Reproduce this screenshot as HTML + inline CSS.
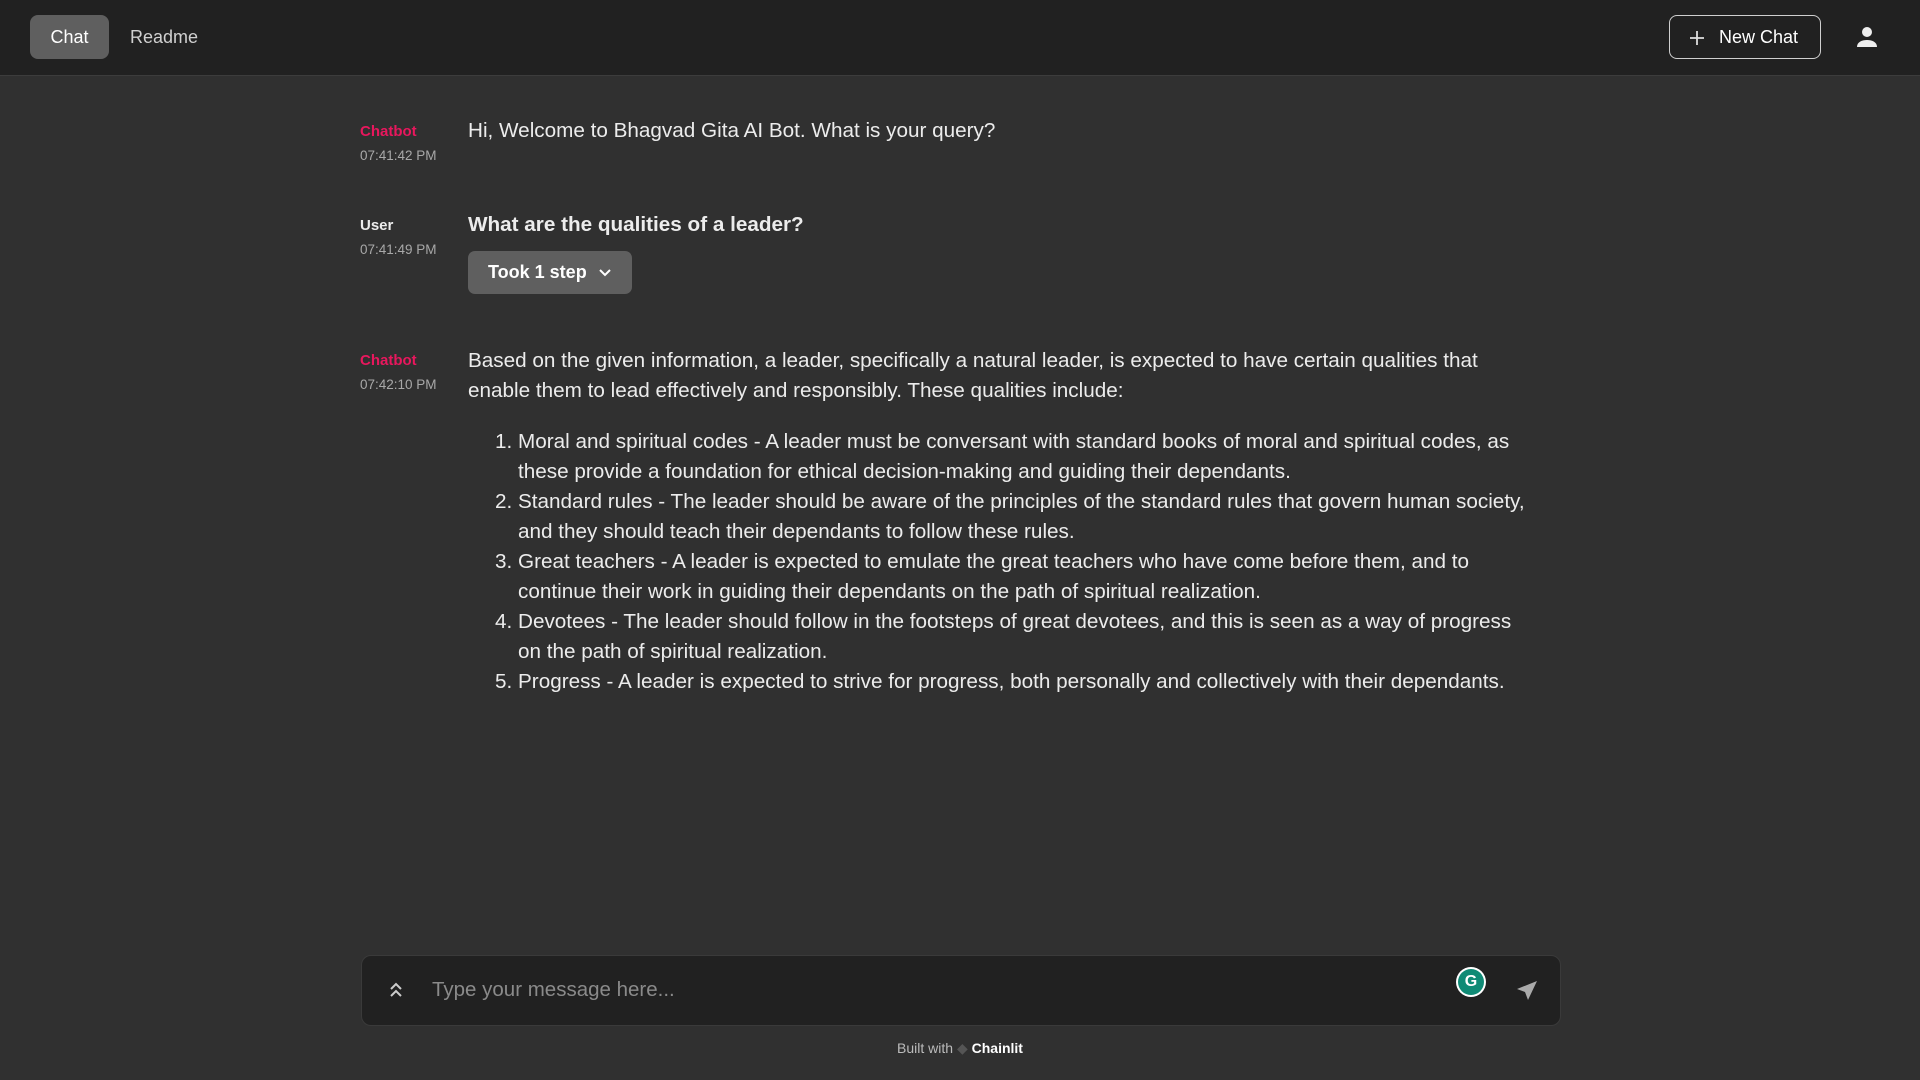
<!DOCTYPE html>
<html><head><meta charset="utf-8"><style>
*{box-sizing:border-box;margin:0;padding:0}
body{width:1920px;height:1080px;background:#303030;font-family:"Liberation Sans",Arial,sans-serif;color:#ececec;position:relative;overflow:hidden}
.hdr{position:absolute;left:0;top:0;width:1920px;height:76px;background:#212121;border-bottom:1px solid #3c3c3c}
.tab{position:absolute;top:15px;height:44px;line-height:44px;font-size:18px;color:#d0d0d0}
.chat{left:30px;width:79px;background:#5f5f5f;border-radius:8px;text-align:center;color:#fff}
.nc{position:absolute;left:1669px;top:15px;width:152px;height:44px;border:1px solid #cfcfcf;border-radius:8px;font-size:18px;line-height:42px;color:#fff;padding-left:49px}
.name{position:absolute;left:360px;font-size:15px;font-weight:bold}
.time{position:absolute;left:360px;font-size:13.5px;color:#a8a8a8}
.txt{position:absolute;left:468px;font-size:20.7px;line-height:30px;color:#ececec}
.pink{color:#e8175d}
ol{position:absolute;left:468px;top:427px;width:1068px;font-size:20.7px;line-height:30px;padding-left:50px}
.inp{position:absolute;left:361px;top:955px;width:1200px;height:71px;background:#212121;border:1px solid #3a3a3a;border-radius:10px}
</style></head><body>
<div class="hdr">
<div class="tab chat">Chat</div>
<div class="tab" style="left:130px">Readme</div>
<div class="nc"><svg style="position:absolute;left:18px;top:13px" width="18" height="18" viewBox="0 0 18 18"><path d="M9 2v14M2 9h14" stroke="#ddd" stroke-width="1.8"/></svg>New Chat</div>
<svg style="position:absolute;left:1855px;top:25px" width="24" height="24" viewBox="0 0 24 24"><circle cx="12" cy="7" r="5" fill="#eee"/><path d="M2 22c0-5 5-7 10-7s10 2 10 7z" fill="#eee"/></svg>
</div>
<div class="name pink" style="top:123px">Chatbot</div>
<div class="time" style="top:148px">07:41:42 PM</div>
<div class="txt" style="top:116px">Hi, Welcome to Bhagvad Gita AI Bot. What is your query?</div>
<div class="name" style="top:217px">User</div>
<div class="time" style="top:242px">07:41:49 PM</div>
<div class="txt" style="top:210px;font-weight:bold">What are the qualities of a leader?</div>
<div style="position:absolute;left:468px;top:251px;width:164px;height:43px;background:#5f5f5f;border-radius:7px;font-size:18px;line-height:43px;padding-left:20px;color:#fff;font-weight:bold">Took 1 step<svg style="position:absolute;left:130px;top:16px" width="14" height="12" viewBox="0 0 14 12"><path d="M2 3l5 5 5-5" stroke="#fff" stroke-width="2" fill="none"/></svg></div>
<div class="name pink" style="top:352px">Chatbot</div>
<div class="time" style="top:377px">07:42:10 PM</div>
<div class="txt" style="top:346px;width:1070px">Based on the given information, a leader, specifically a natural leader, is expected to have certain qualities that enable them to lead effectively and responsibly. These qualities include:</div>
<ol>
<li>Moral and spiritual codes - A leader must be conversant with standard books of moral and spiritual codes, as these provide a foundation for ethical decision-making and guiding their dependants.</li>
<li>Standard rules - The leader should be aware of the principles of the standard rules that govern human society, and they should teach their dependants to follow these rules.</li>
<li>Great teachers - A leader is expected to emulate the great teachers who have come before them, and to continue their work in guiding their dependants on the path of spiritual realization.</li>
<li>Devotees - The leader should follow in the footsteps of great devotees, and this is seen as a way of progress on the path of spiritual realization.</li>
<li>Progress - A leader is expected to strive for progress, both personally and collectively with their dependants.</li>
</ol>
<div class="inp">
<svg style="position:absolute;left:26px;top:24px" width="16" height="20" viewBox="0 0 16 20"><path d="M3 9l5-5 5 5M3 16l5-5 5 5" stroke="#ccc" stroke-width="2" fill="none"/></svg>
<div style="position:absolute;left:70px;top:22px;font-size:20.5px;color:#8a8a8a">Type your message here...</div>
<div style="position:absolute;left:1094px;top:11px;width:30px;height:30px;border-radius:50%;background:#fff;padding:2px"><div style="width:26px;height:26px;border-radius:50%;background:#0f8a75;color:#fff;font-size:16px;font-weight:bold;text-align:center;line-height:26px">G</div></div>
<svg style="position:absolute;left:1153px;top:23px" width="24" height="24" viewBox="0 0 24 24"><path d="M22 2L2 10l8 3 3 8z" fill="#aaa"/></svg>
</div>
<div style="position:absolute;left:0;width:1920px;top:1040px;text-align:center;font-size:14px;color:#bbb">Built with <span style="color:#555">◆</span> <b style="color:#fff">Chainlit</b></div>
</body></html>
